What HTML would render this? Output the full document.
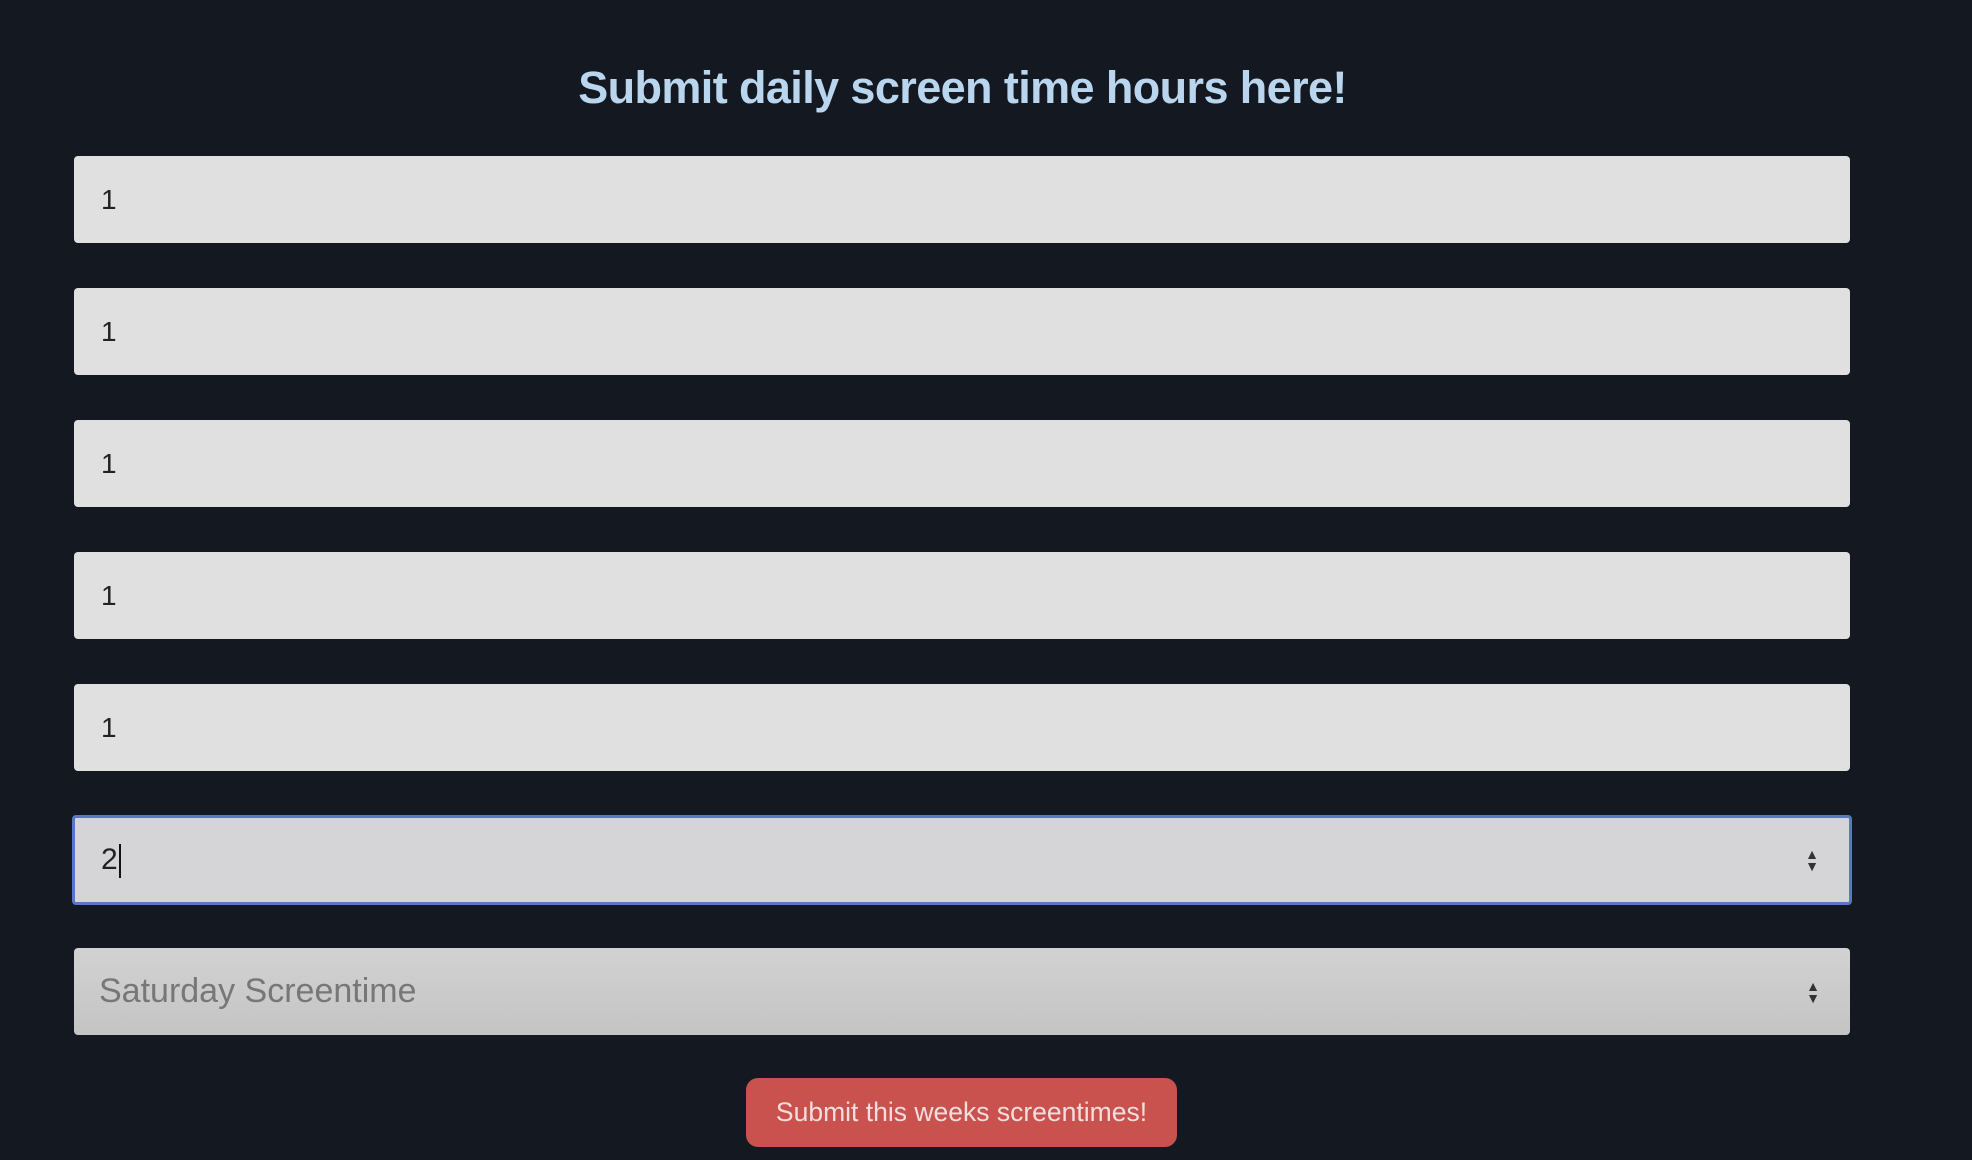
<!DOCTYPE html>
<html><head><meta charset="utf-8"><style>
html,body{margin:0;padding:0;width:1972px;height:1160px;overflow:hidden;background:#141820;font-family:"Liberation Sans",sans-serif;}
h1{position:absolute;left:0;width:1925px;top:62px;margin:0;text-align:center;color:#b9d6ee;font-size:45px;font-weight:bold;letter-spacing:-0.6px;}
.in{position:absolute;left:74px;width:1776px;height:87px;background:#e0e0e0;border-radius:4px;box-sizing:border-box;padding-left:27px;font-size:28px;color:#222;line-height:87px;}
.f{background:#d5d5d7;border:3px solid #5877c6;left:72px;width:1780px;height:90px;line-height:84px;padding-left:26px;font-size:30px;}
.s{background:linear-gradient(#d2d2d2,#c4c4c4);color:#777;padding-left:25px;font-size:34px;}
.arr{position:absolute;right:30px;top:50%;transform:translateY(-50%);font-size:14px;line-height:12px;color:#333;text-align:center;}
.btn{position:absolute;left:746px;top:1078px;width:431px;height:69px;background:#c9524e;border-radius:12px;color:#f3dede;font-size:26.5px;text-align:center;line-height:69px;}
</style></head><body>
<h1>Submit daily screen time hours here!</h1>
<div class="in" style="top:156px">1</div>
<div class="in" style="top:288px">1</div>
<div class="in" style="top:420px">1</div>
<div class="in" style="top:552px">1</div>
<div class="in" style="top:684px">1</div>
<div class="in f" style="top:815px">2<span style="display:inline-block;width:2px;height:34px;background:#111;vertical-align:middle;margin-left:1px"></span><div class="arr">▲<br>▼</div></div>
<div class="in s" style="top:948px">Saturday Screentime<div class="arr">▲<br>▼</div></div>
<div class="btn">Submit this weeks screentimes!</div>
</body></html>
